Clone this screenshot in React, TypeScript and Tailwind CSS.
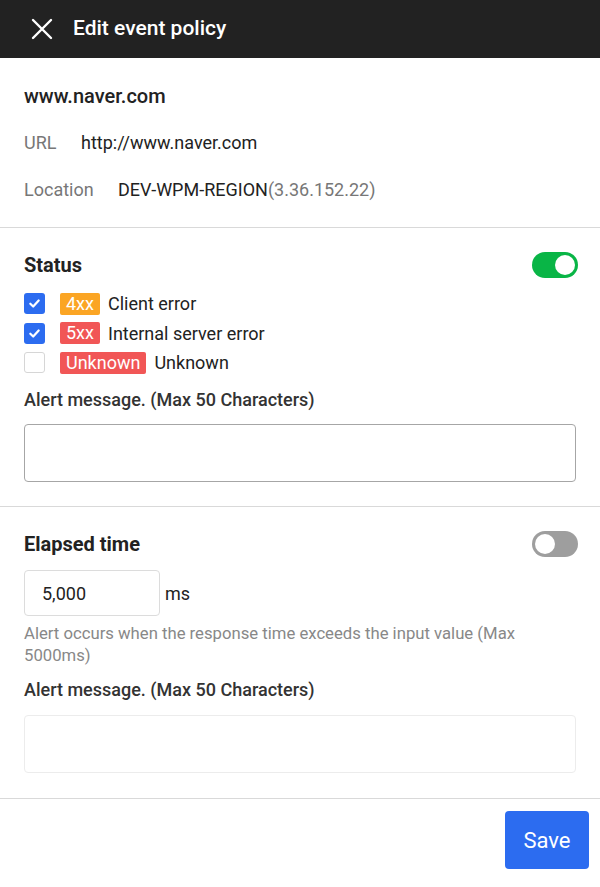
import React, { useState } from 'react';

const Toggle: React.FC<{ on: boolean; onClick: () => void }> = ({ on, onClick }) => (
  <button
    onClick={onClick}
    className={`w-[46px] h-[26px] rounded-full p-[3px] mr-[-2px] flex items-center transition-colors ${on ? 'bg-[#09b546] justify-end' : 'bg-[#9e9e9e] justify-start'}`}
  >
    <span className="w-[20px] h-[20px] rounded-full bg-white block" />
  </button>
);

const Check: React.FC<{ checked: boolean; onClick: () => void }> = ({ checked, onClick }) => (
  <button
    onClick={onClick}
    className={`w-[21px] h-[21px] rounded-[3px] flex items-center justify-center shrink-0 ${checked ? 'bg-[#2c6cf0]' : 'bg-white border border-[#d6d6d6]'}`}
  >
    {checked && (
      <svg width="13" height="13" viewBox="0 0 14 14" fill="none">
        <path d="M2.5 7.2L5.6 10.2L11.5 3.8" stroke="white" strokeWidth="2.4" strokeLinecap="round" strokeLinejoin="round" />
      </svg>
    )}
  </button>
);

const App: React.FC = () => {
  const [statusOn, setStatusOn] = useState(true);
  const [elapsedOn, setElapsedOn] = useState(false);
  const [checks, setChecks] = useState([true, true, false]);

  const rows = [
    { badge: '4xx', color: 'bg-[#fba524]', label: 'Client error' },
    { badge: '5xx', color: 'bg-[#f15656]', label: 'Internal server error' },
    { badge: 'Unknown', color: 'bg-[#f15656]', label: 'Unknown' },
  ];

  return (
    <div className="w-[600px] h-[887px] bg-white flex flex-col" style={{ fontFamily: 'Roboto, "Noto Sans", sans-serif' }}>
      {/* Header */}
      <div className="h-[58px] bg-[#222222] flex items-center px-[30px] gap-[19px] shrink-0">
        <svg width="24" height="24" viewBox="0 0 24 24" fill="none">
          <path d="M3 3L21 21M21 3L3 21" stroke="white" strokeWidth="2.4" strokeLinecap="round" />
        </svg>
        <span className="text-white text-[21px] font-medium">Edit event policy</span>
      </div>

      {/* Site info */}
      <div className="px-6 pt-[25px] pb-[24px] border-b border-[#d9d9d9]">
        <div className="text-[20px] font-medium text-[#222] leading-[26px]">www.naver.com</div>
        <div className="flex mt-[21px] text-[18px] leading-[26px]">
          <span className="text-[#777] w-[57px]">URL</span>
          <span className="text-[#222]">http://www.naver.com</span>
        </div>
        <div className="flex mt-[21px] text-[18px] leading-[26px]">
          <span className="text-[#777] w-[94px]">Location</span>
          <span className="text-[#222]">DEV-WPM-REGION<span className="text-[#777]">(3.36.152.22)</span></span>
        </div>
      </div>

      {/* Status */}
      <div className="px-6 pt-[24px] pb-[24px] border-b border-[#d9d9d9]">
        <div className="flex items-center justify-between h-[26px]">
          <span className="text-[20px] font-bold text-[#222]">Status</span>
          <Toggle on={statusOn} onClick={() => setStatusOn(!statusOn)} />
        </div>
        <div className="mt-[15px] flex flex-col gap-[8.5px]">
          {rows.map((r, i) => (
            <div key={i} className="flex items-center h-[21px]">
              <Check checked={checks[i]} onClick={() => setChecks(checks.map((c, j) => (j === i ? !c : c)))} />
              <span className={`${r.color} text-white text-[18px] leading-[22px] px-[6px] rounded-[2px] ml-[15px]`}>{r.badge}</span>
              <span className="text-[18px] text-[#222] ml-[8px]">{r.label}</span>
            </div>
          ))}
        </div>
        <div className="mt-[14px] text-[18px] font-medium text-[#333] leading-[26px]">Alert message. (Max 50 Characters)</div>
        <input className="mt-[11px] w-full h-[58px] border border-[#a6a6a6] rounded-[4px] outline-none px-3 text-[18px]" />
      </div>

      {/* Elapsed time */}
      <div className="px-6 pt-[24px] pb-[25px] border-b border-[#d9d9d9]">
        <div className="flex items-center justify-between h-[26px]">
          <span className="text-[20px] font-bold text-[#222]">Elapsed time</span>
          <Toggle on={elapsedOn} onClick={() => setElapsedOn(!elapsedOn)} />
        </div>
        <div className="mt-[13px] flex items-center gap-[5px]">
          <input
            defaultValue="5,000"
            className="w-[136px] h-[46px] border border-[#dcdcdc] rounded-[4px] px-[17px] text-[18px] text-[#222] outline-none"
          />
          <span className="text-[18px] text-[#222]">ms</span>
        </div>
        <p className="mt-[7px] text-[16.7px] leading-[22px] text-[#888] pr-12">
          Alert occurs when the response time exceeds the input value (Max 5000ms)
        </p>
        <div className="mt-[10px] text-[18px] font-medium text-[#333] leading-[26px]">Alert message. (Max 50 Characters)</div>
        <input className="mt-[12px] w-full h-[58px] border border-[#ececec] rounded-[4px] outline-none px-3 text-[18px]" />
      </div>

      {/* Footer */}
      <div className="flex justify-end pt-[12px] pr-[11px]">
        <button className="w-[84px] h-[58px] bg-[#2c6cf0] text-white text-[22px] rounded-[4px]">Save</button>
      </div>
    </div>
  );
};

export default App;
